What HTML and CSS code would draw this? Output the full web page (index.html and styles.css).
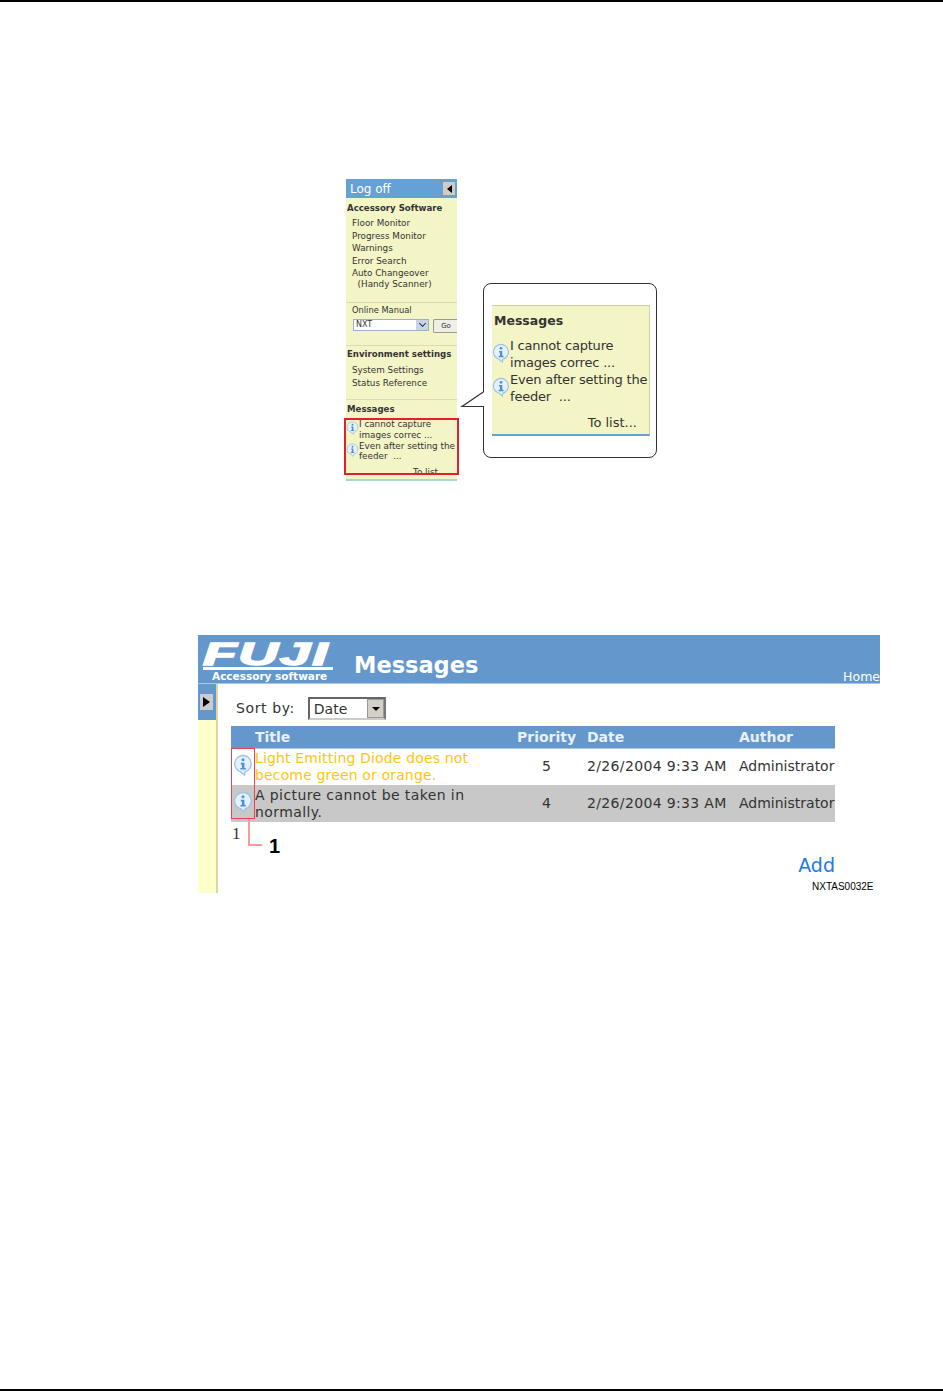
FILE: index.html
```html
<!DOCTYPE html>
<html>
	<head>
		<meta charset="UTF-8" />
		<title>Messages</title>
		<link rel="stylesheet" href="styles.css">
	</head>
	<body>
		<svg class="defs" width="0" height="0">
			<symbol id="info" viewBox="0 0 20 22">
				<path d="M10 1.5a8.3 8.3 0 0 0-2.6 16.2L11.5 21l.6-3.2A8.3 8.3 0 0 0 10 1.5z" fill="#e4f1fb" stroke="#9cc3e8" stroke-width="1.3"/>
				<circle cx="10" cy="5.8" r="1.5" fill="#4f8fd0"/>
				<path d="M7.8 8.8h3.6v5.2h1.4v1.6H7.4V14h1.5v-3.6H7.8z" fill="#4f8fd0"/>
			</symbol>
		</svg>
		<div class="page">
			<div class="figure-top">
				<div class="sidebar">
					<div class="logoff">
						<span>Log off</span>
						<span class="collapse"><i></i></span>
					</div>
					<div class="side-sec sec-soft">
						<b>Accessory Software</b>
						<a>Floor Monitor</a>
						<a>Progress Monitor</a>
						<a>Warnings</a>
						<a>Error Search</a>
						<a class="tight">Auto Changeover<br>&nbsp;&nbsp;(Handy Scanner)</a>
					</div>
					<div class="side-sec sec-manual">
						<a>Online Manual</a>
						<div class="manual-row">
							<span class="mini-select">NXT<i></i></span>
							<span class="go">Go</span>
						</div>
					</div>
					<div class="side-sec sec-env">
						<b>Environment settings</b>
						<a>System Settings</a>
						<a>Status Reference</a>
					</div>
					<div class="side-sec sec-msg">
						<b>Messages</b>
						<div class="side-msg">
							<svg class="ico-s"><use href="#info"/></svg>
							<span>I cannot capture<br>images correc ...</span>
						</div>
						<div class="side-msg">
							<svg class="ico-s"><use href="#info"/></svg>
							<span>Even after setting the<br>feeder &nbsp;...</span>
						</div>
						<div class="side-tolist">To list</div>
					</div>
					<div class="red-box"></div>
				</div>
				<div class="callout">
					<svg class="tail" width="26" height="18" viewBox="0 0 26 18">
						<path d="M24 .5 2 15.5h22" fill="#fff" stroke="#333" stroke-width="1.2"/>
						<rect x="24" y="1" width="2" height="14" fill="#fff"/>
					</svg>
					<div class="callout-panel">
						<b>Messages</b>
						<div class="call-msg">
							<svg class="ico-m"><use href="#info"/></svg>
							<span>I cannot capture<br>images correc ...</span>
						</div>
						<div class="call-msg">
							<svg class="ico-m"><use href="#info"/></svg>
							<span>Even after setting the<br>feeder &nbsp;...</span>
						</div>
						<div class="call-tolist">To list...</div>
					</div>
				</div>
			</div>

			<div class="screen">
				<div class="banner">
					<div class="logo">
						<div class="logo-word"><span>FUJI</span></div>
						<div class="logo-sub">Accessory software</div>
					</div>
					<h1>Messages</h1>
					<a class="home">Home</a>
				</div>
				<div class="screen-body">
					<div class="rail">
						<div class="rail-top"><span class="expand"><i></i></span></div>
					</div>
					<div class="main">
						<div class="sort">
							<span class="sort-label">Sort by:</span>
							<span class="select">Date<i><u></u></i></span>
						</div>
						<table class="msgs">
							<colgroup>
								<col class="c-ico"><col class="c-title"><col class="c-pri"><col class="c-date"><col class="c-auth">
							</colgroup>
							<thead>
								<tr><th></th><th>Title</th><th>Priority</th><th>Date</th><th>Author</th></tr>
							</thead>
							<tbody>
								<tr class="unread">
									<td class="ico"><svg class="ico-l"><use href="#info"/></svg></td>
									<td class="subject">Light Emitting Diode does not<br>become green or orange.</td>
									<td class="num">5</td>
									<td class="when">2/26/2004 9:33 AM</td>
									<td>Administrator</td>
								</tr>
								<tr class="alt">
									<td class="ico"><svg class="ico-l"><use href="#info"/></svg></td>
									<td class="subject">A picture cannot be taken in<br>normally.</td>
									<td class="num">4</td>
									<td class="when">2/26/2004 9:33 AM</td>
									<td>Administrator</td>
								</tr>
							</tbody>
						</table>
						<div class="pager">1</div>
						<div class="add"><a>Add</a></div>
						<div class="fig-code">NXTAS0032E</div>

						<div class="mark-box"></div>
						<div class="mark-line"></div>
						<div class="mark-num">1</div>
					</div>
				</div>
			</div>
		</div>
	</body>
</html>
```

FILE: styles.css
```css
* {
	box-sizing: border-box;
}

body {
	margin: 0;
	background-color: #fff;
	font-family: "DejaVu Sans", sans-serif;
	color: #333;
}

.defs {
	position: absolute;
}

.page {
	height: 1391px;
	border-top: 2px solid #000;
	border-bottom: 2px solid #000;
	overflow: hidden;
}

/* top figure */
.figure-top {
	display: flex;
	align-items: flex-start;
	margin: 177px 0 0 346px;
	height: 302px;
}

.sidebar {
	position: relative;
	width: 111px;
	height: 302px;
	background-color: #f3f5c6;
	border-bottom: 2px solid #a8d8c8;
	font-size: 8.8px;
}

.logoff {
	display: flex;
	justify-content: space-between;
	align-items: center;
	height: 19px;
	padding: 0 2px 0 4px;
	background-color: #65a0d6;
	color: #fff;
	font-size: 12px;
}

.collapse, .expand {
	display: flex;
	align-items: center;
	justify-content: center;
	width: 12px;
	height: 13px;
	background-color: #d0ccc4;
}

.collapse i {
	border: 4px solid transparent;
	border-right: 5px solid #000;
	border-left: 0;
}

.side-sec {
	padding-left: 6px;
	border-bottom: 1px solid #dcdcb0;
}

.side-sec b {
	display: block;
	margin-left: -5px;
	height: 12px;
	line-height: 12px;
	font-size: 8.6px;
	white-space: nowrap;
}

.side-sec a {
	display: block;
	height: 12.7px;
	line-height: 12.7px;
	white-space: nowrap;
}

.side-sec a.tight {
	height: 22px;
	line-height: 11px;
}

.sec-soft {
	height: 105px;
	padding-top: 4px;
}

.sec-soft b {
	margin-bottom: 3px;
}

.sec-manual {
	height: 43px;
	padding-top: 1px;
}

.sec-manual a {
	font-size: 8.3px;
}

.manual-row {
	display: flex;
	margin: 2px 0 0 1px;
	overflow: hidden;
}

.mini-select {
	position: relative;
	width: 77px;
	height: 12px;
	line-height: 10px;
	padding-left: 2px;
	background-color: #fff;
	border: 1px solid #9db0c4;
	font-size: 8px;
}

.mini-select i {
	position: absolute;
	right: 0;
	top: 0;
	width: 12px;
	height: 10px;
	background-color: #c8d4ea;
}

.mini-select i::after {
	content: "";
	position: absolute;
	left: 4px;
	top: 1px;
	width: 4px;
	height: 4px;
	border-right: 1.5px solid #333;
	border-bottom: 1.5px solid #333;
	transform: rotate(45deg);
}

.go {
	width: 24px;
	height: 14px;
	margin-left: 4px;
	line-height: 12px;
	padding-left: 7px;
	background-color: #f0efe6;
	border: 1px solid #9a9a90;
	border-right: 0;
	border-radius: 2px 0 0 2px;
	font-size: 7px;
}

.sec-env {
	height: 54px;
	padding-top: 2px;
}

.sec-env b {
	margin-bottom: 4px;
}

.sec-msg {
	border-bottom: 0;
	padding-top: 3px;
	padding-left: 0;
}

.sec-msg b {
	margin-left: 1px;
	margin-bottom: 4px;
}

.side-msg {
	display: flex;
	align-items: center;
	height: 21.5px;
	line-height: 10.5px;
	white-space: nowrap;
}

.ico-s {
	width: 13px;
	height: 14px;
	margin-top: -3px;
	flex: none;
}

.side-tolist {
	margin: 5px 0 0 67px;
	line-height: 10px;
}

.red-box {
	position: absolute;
	left: -2px;
	top: 239px;
	width: 115px;
	height: 57px;
	border: 2px solid #e2202c;
}

/* callout */
.callout {
	position: relative;
	width: 174px;
	height: 175px;
	margin: 104px 0 0 26px;
	padding: 21px 6px 0 8px;
	background-color: #fff;
	border: 1.5px solid #333;
	border-radius: 8px;
}

.tail {
	position: absolute;
	left: -24px;
	top: 107px;
}

.callout-panel {
	position: relative;
	width: 158px;
	height: 131px;
	padding: 6px 1px 0 2px;
	background-color: #f3f5c6;
	border-top: 1px solid #cfd0a0;
	border-right: 1px solid #cfd0a0;
	border-bottom: 2px solid #65a0d6;
	font-size: 13px;
	line-height: 17px;
}

.callout-panel b {
	display: block;
	height: 19px;
	margin-bottom: 6px;
	font-size: 12.5px;
}

.call-msg {
	display: flex;
	align-items: center;
	white-space: nowrap;
	letter-spacing: -0.2px;
}

.ico-m {
	width: 18px;
	height: 20px;
	margin: -3px 0 0 -2px;
	flex: none;
}

.call-tolist {
	margin-top: 9px;
	padding-right: 11px;
	text-align: right;
}

/* screen shot of the messages page */
.screen {
	width: 682px;
	height: 258px;
	margin: 154px 0 0 198px;
}

.banner {
	position: relative;
	display: flex;
	height: 49px;
	background-color: #6497cb;
	border-bottom: 1px solid #a8c8e8;
	color: #fff;
}

.logo {
	width: 156px;
	padding: 0 0 0 5px;
}

.logo-word {
	width: 130px;
	height: 35px;
	border-bottom: 3px solid #fff;
	font: italic bold 32px/38px "Liberation Sans", sans-serif;
	white-space: nowrap;
}

.logo-word span {
	display: inline-block;
	letter-spacing: 1px;
	-webkit-text-stroke: 1.5px #fff;
	transform: scaleX(1.72);
	transform-origin: left center;
}

.logo-sub {
	margin-left: 9px;
	font-size: 10.5px;
	font-weight: bold;
	line-height: 12px;
	white-space: nowrap;
}

.banner h1 {
	margin: 15px 0 0 0;
	font-size: 22.5px;
	line-height: 30px;
}

.home {
	position: absolute;
	right: 0;
	bottom: -1px;
	font-size: 12.5px;
	line-height: 14px;
}

.screen-body {
	display: flex;
	height: 209px;
}

.rail {
	flex: none;
	width: 20px;
	background-color: #ffffcc;
	border-right: 2px solid #d8d8a0;
}

.rail-top {
	height: 36px;
	padding: 10px 0 0 2px;
	background-color: #6497cb;
}

.expand {
	width: 13px;
	height: 16px;
	background-color: #ccc;
}

.expand i {
	border: 5px solid transparent;
	border-left: 7px solid #000;
	border-right: 0;
}

.main {
	position: relative;
	flex: 1;
	min-width: 0;
	padding: 12px 0 0 13px;
	font-size: 13.5px;
	color: #333;
}

.sort {
	display: flex;
	align-items: center;
	gap: 13px;
	height: 24px;
	margin: 0 0 6px 5px;
}

.sort-label {
	font-size: 14px;
	letter-spacing: 0.6px;
}

.select {
	position: relative;
	width: 78px;
	height: 23px;
	padding-left: 4px;
	line-height: 21px;
	font-size: 14px;
	border: 2px solid;
	border-color: #666 #777 #ccc #666;
	background-color: #fff;
}

.select i {
	position: absolute;
	right: 0;
	top: 0;
	width: 17px;
	height: 19px;
	background-color: #d4d0c8;
	border: 1px solid #999;
}

.select u {
	position: absolute;
	left: 4px;
	top: 7px;
	border: 4px solid transparent;
	border-top: 4px solid #000;
	border-bottom: 0;
}

.msgs {
	width: 604px;
	table-layout: fixed;
	border-collapse: collapse;
	font-size: 14px;
	line-height: 17px;
}

.c-ico { width: 24px; }
.c-title { width: 262px; }
.c-pri { width: 70px; }
.c-date { width: 152px; }
.c-auth { width: 96px; }

.msgs th {
	height: 22px;
	padding: 2px 0 0;
	text-align: left;
	font-size: 14px;
	font-weight: bold;
	color: #e8f0f8;
	background-color: #6497cb;
	border-bottom: 1px solid #a8c8e8;
}

.msgs td {
	height: 37px;
	padding: 0;
	white-space: nowrap;
	font-size: 14px;
}

.msgs .alt td {
	background-color: #c8c8c8;
}

.msgs td.subject {
	letter-spacing: 0.15px;
}

.msgs .alt td.subject {
	letter-spacing: 0.4px;
}

.msgs .unread td.subject {
	color: #fdc513;
}

.msgs td.when {
	letter-spacing: 0.35px;
}

.msgs td.num {
	padding-left: 25px;
}

.msgs td.ico {
	padding-left: 2px;
}

.ico-l {
	display: block;
	width: 20px;
	height: 22px;
	margin-top: -3px;
}

.pager {
	margin: 1px 0 0 1px;
	font: 17px/22px "Liberation Serif", serif;
}

.add {
	width: 604px;
	margin-top: 8px;
	text-align: right;
	font-size: 19px;
	line-height: 24px;
	color: #1a78f0;
}

.fig-code {
	margin: 3px 0 0 581px;
	font: 10px/13px "Liberation Sans", sans-serif;
	color: #000;
	white-space: nowrap;
}

.mark-box {
	position: absolute;
	left: 13px;
	top: 64px;
	width: 24px;
	height: 71px;
	border: 1px solid #f04050;
}

.mark-line {
	position: absolute;
	left: 30px;
	top: 135px;
	width: 14px;
	height: 27px;
	border-left: 2px solid #fa9a9a;
	border-bottom: 2px solid #fa9a9a;
}

.mark-num {
	position: absolute;
	left: 51px;
	top: 150px;
	font: bold 20px/24px "Liberation Sans", sans-serif;
	color: #000;
}
```
